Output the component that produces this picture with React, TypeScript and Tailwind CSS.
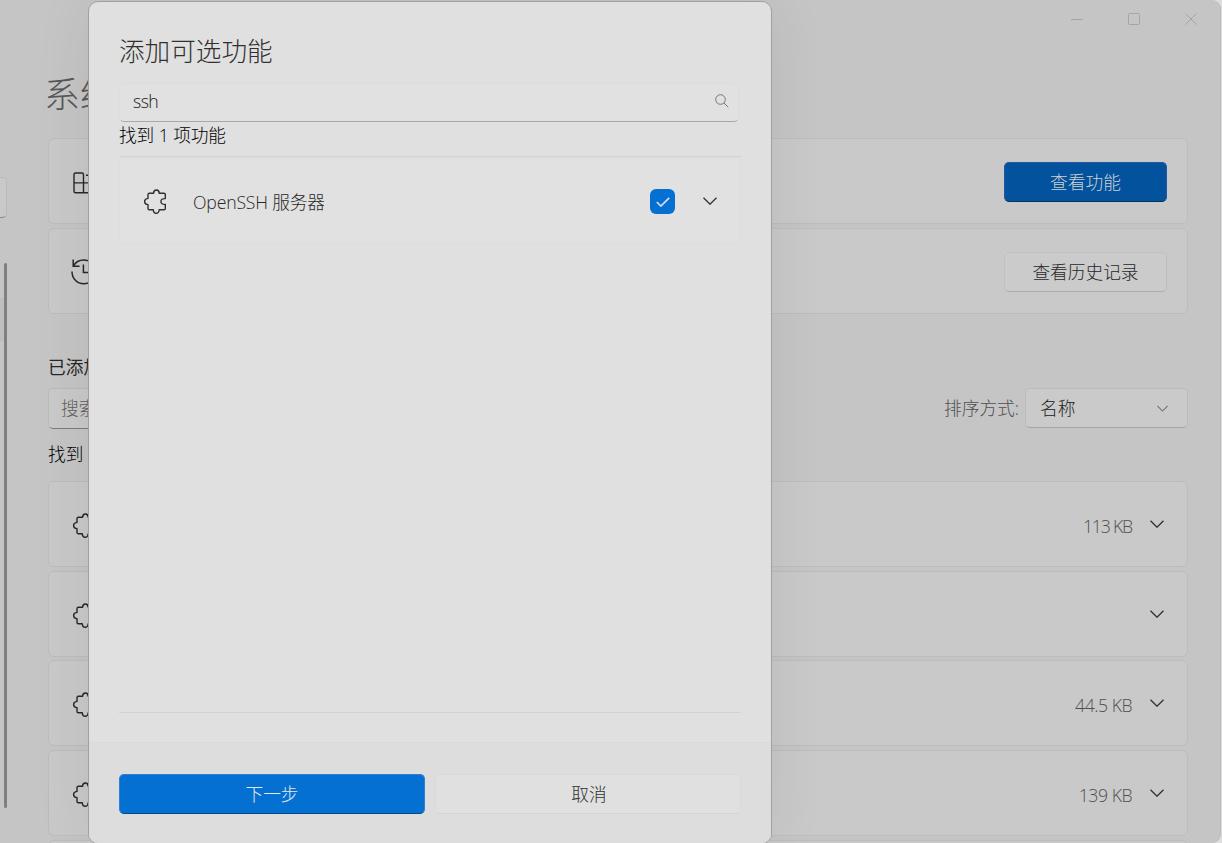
import { useState } from "react";
import type { ReactNode } from "react";
import clsx from "clsx";

const features = [
  { id: "a", size: "113 KB" },
  { id: "b", size: "" },
  { id: "c", size: "44.5 KB" },
  { id: "d", size: "139 KB" },
  { id: "e", size: "" },
];

const PuzzleIcon = ({ className }: { className?: string }) => (
  <svg
    viewBox="0 0 24 26"
    className={clsx("h-[26px] w-6 shrink-0", className)}
    fill="none"
    stroke="currentColor"
    strokeWidth="1.4"
    strokeLinejoin="round"
  >
    <path d="M6.3 4.3H10.6C10.6 2 11.7 1 13.4 1S16.2 2 16.2 4.3H21Q22.3 4.3 22.3 5.6V9.6C19.3 9.4 17.9 10.6 17.9 12.5S19.3 15.6 22.3 15.4V19.4Q22.3 20.7 21 20.7H16.2C16 23 15 24.2 13.2 24.2S10.4 23 10.3 20.7H6.3Q5 20.7 5 19.4V15.6C2.9 15.4 1.6 14.3 1.6 12.5S2.9 9.6 5 9.4V5.6Q5 4.3 6.3 4.3Z" />
  </svg>
);

const GridIcon = () => (
  <svg viewBox="0 0 24 24" className="mt-[3px] size-6" fill="none" stroke="currentColor" strokeWidth="1.4">
    <path d="M11.5 11.9V3.5Q11.5 2 10 2H3.5Q2 2 2 3.5V20.3Q2 21.8 3.5 21.8H20Q21.5 21.8 21.5 20.3V11.9H2M11.5 11.9V21.8M14 4.2H20" />
  </svg>
);

const HistoryIcon = () => (
  <svg viewBox="0 0 28 28" className="mt-0.5 size-7" fill="none" stroke="currentColor" strokeWidth="1.5">
    <path d="M3.2 1.5V8.2H9.5M3.5 8C5.5 4 9 2 13.8 2C20.5 2 25.5 7 25.5 13.8S20.5 25.7 13.8 25.7S2 20.5 2 13.4M13.4 6.5V14.5H19" />
  </svg>
);

const Chevron = ({ className }: { className?: string }) => (
  <svg
    viewBox="0 0 14 8"
    className={clsx("shrink-0", className ?? "h-2 w-3.5")}
    fill="none"
    stroke="currentColor"
    strokeWidth="1.3"
  >
    <path d="M0.5 0.8 7 7.2 13.5 0.8" />
  </svg>
);

const Card = ({ children }: { children?: ReactNode }) => (
  <div className="flex h-[86px] shrink-0 items-center rounded-md border border-[#bcbcbc] bg-[#c9c9c9] pr-5 pl-[23px]">
    {children}
  </div>
);

const TitleBar = () => (
  <div className="flex h-10 shrink-0 items-start justify-end gap-[45px] pt-[13px] pr-[23px] text-[#a5a5a5]">
    <svg viewBox="0 0 12 12" className="size-3" stroke="currentColor">
      <path d="M0 6.5H12" />
    </svg>
    <svg viewBox="0 0 12 12" className="size-3" fill="none" stroke="currentColor">
      <rect x="0.5" y="0.5" width="11" height="11" rx="1" />
    </svg>
    <svg viewBox="0 0 12 12" className="size-3" stroke="currentColor">
      <path d="M0.3 0.3 11.7 11.7M11.7 0.3 0.3 11.7" />
    </svg>
  </div>
);

// Right edge of the navigation pane: search box, selected item and scrollbar
const NavEdge = () => (
  <div className="flex w-12 shrink-0 flex-col">
    <div className="mt-[177px] h-[41px] w-[7px] rounded-r-[5px] border border-l-0 border-[#b9b9b9] border-b-[#858585] bg-[#c9c9c9]" />
    <div className="mt-[45px] flex h-[545px]">
      <div className="mt-[34px] h-11 w-1 bg-[#bfbfbf]" />
      <div className="w-[3px] rounded-full bg-[#808080]" />
    </div>
  </div>
);

const OptionalFeaturesPage = () => (
  <div className="flex h-[843px] w-[1221px] overflow-hidden rounded-tr-[9px] rounded-br-[9px] border-r border-[#bababa] bg-[#c5c5c5]">
    <NavEdge />
    <div className="flex min-w-0 flex-1 flex-col">
      <TitleBar />
      <div className="mr-[32px] flex min-h-0 flex-1 flex-col">
        <h1 className="mt-[29px] -ml-1 h-[69px] shrink-0 text-[36px] leading-[52px] font-light text-[#585858]">
          系统
        </h1>
        <div className="flex shrink-0 flex-col gap-1">
          <Card>
            <span className="text-[#282828]">
              <GridIcon />
            </span>
            <button className="mt-0.5 ml-auto h-10 w-[163px] rounded-[5px] border border-[#2358a0] border-b-[#0a2f61] bg-[#02529d] text-[#d0d0d0]">
              查看功能
            </button>
          </Card>
          <Card>
            <span className="-ml-[2px] text-[#282828]">
              <HistoryIcon />
            </span>
            <button className="mt-0.5 ml-auto h-10 w-[163px] rounded-[5px] border border-[#c0c0c0] border-b-[#adadad] bg-[#cbcbcb] text-[#282828]">
              查看历史记录
            </button>
          </Card>
        </div>

        <h2 className="mt-[39px] h-[35px] shrink-0 leading-7 font-normal text-[#282828]">
          已添加的功能
        </h2>
        <div className="flex h-10 shrink-0 items-center">
          <div className="flex h-[41px] w-[300px] items-center rounded-[5px] border border-[#bababa] border-b-[#7c7c7c] bg-[#c9c9c9] pl-3 text-[#606060]">
            搜索已添加的功能
          </div>
          <span className="mr-[6px] ml-auto text-[#505050]">排序方式:</span>
          <button className="flex h-10 w-[163px] items-center justify-between rounded-[5px] border border-[#bcbcbc] border-b-[#a5a5a5] bg-[#cacaca] pr-[19px] pl-[14px] text-[#202020]">
            名称
            <Chevron className="h-[7px] w-[11px] text-[#707070]" />
          </button>
        </div>
        <p className="mt-[12px] h-[41px] shrink-0 leading-7 text-black">找到 12 项功能</p>

        <div className="flex flex-col gap-[3.7px]">
          {features.map((f) => (
            <Card key={f.id}>
              <PuzzleIcon className="mt-1 text-[#282828]" />
              <span
                className={clsx(
                  "mr-[18px] ml-auto pt-1 text-[#505050]",
                  f.size.startsWith("11") ? "tracking-[-1.2px]" : "tracking-[-0.5px]",
                )}
              >
                {f.size}
              </span>
              <Chevron className="mr-[3px] h-2 w-3.5 text-[#303030]" />
            </Card>
          ))}
        </div>
      </div>
    </div>
  </div>
);

const AddFeatureDialog = () => {
  const [query, setQuery] = useState("ssh");
  const [checked, setChecked] = useState(true);

  return (
    <div className="absolute top-px left-[88px] flex h-[843px] w-[684px] flex-col overflow-hidden rounded-[10px] border border-[#a0a0a0] bg-[#e0e0e0] shadow-[0_0_60px_rgba(0,0,0,0.07)]">
      <div className="flex h-[740px] flex-col px-[30px]">
        <h2 className="mt-[31px] h-[50px] text-[25.6px] leading-[38px] font-light text-[#303030]">
          添加可选功能
        </h2>
        <div className="flex h-[39px] w-[620px] items-center rounded-[5px] border border-[#dddddd] border-b-[#a8a8a8] bg-[#e1e1e1] pr-[9px] pl-[13px]">
          <input
            value={query}
            onChange={(e) => setQuery(e.target.value)}
            className="min-w-0 flex-1 bg-transparent pb-[3px] tracking-[-0.6px] text-[#202020] outline-none"
          />
          <svg
            viewBox="0 0 14 14"
            className="mb-[3px] size-3.5 text-[#777]"
            fill="none"
            stroke="currentColor"
          >
            <circle cx="5.5" cy="5.5" r="4.8" />
            <path d="M9 9 13.3 13.3" />
          </svg>
        </div>
        <p className="h-[34px] leading-[26px] tracking-[-0.1px] text-black">找到 1 项功能</p>
        <div className="flex h-[557px] flex-col border-y border-[#d2d2d2]">
          <div className="flex h-[87px] items-center rounded-md border border-[#dddddd] bg-[#e1e1e1] pr-[23px] pl-[23px]">
            <PuzzleIcon className="mt-0.5 text-[#303030]" />
            <span className="ml-[26px] pt-1 tracking-[-0.2px] text-[#282828]">OpenSSH 服务器</span>
            <button
              onClick={() => setChecked(!checked)}
              className={clsx(
                "mt-0.5 ml-auto flex size-[25px] items-center justify-center rounded-md",
                checked ? "bg-[#0370d2]" : "border border-[#808080]",
              )}
              aria-label="OpenSSH 服务器"
            >
              <svg
                viewBox="0 0 14 10"
                className="h-[10px] w-3.5 text-[#dcdcee]"
                fill="none"
                stroke="currentColor"
                strokeWidth="1.7"
              >
                <path d="M0.8 5 4.9 9 13.2 0.9" />
              </svg>
            </button>
            <Chevron className="ml-[28px] h-2 w-3.5 text-[#303030]" />
          </div>
        </div>
      </div>
      <div className="flex flex-1 gap-[10px] border-t border-[#dadada] bg-[#dddddd] px-[30px] pt-[31px]">
        <button className="h-10 w-[306px] rounded-[5px] border border-[#2f7fd3] border-b-[#05468a] bg-[#0370d2] text-[#e8e8e8]">
          下一步
        </button>
        <button className="h-10 w-[306px] rounded-[5px] border border-[#dadada] border-b-[#d3d3d3] bg-[#e0e0e0] pl-0.5 text-[#303030]">
          取消
        </button>
      </div>
    </div>
  );
};

export default function App() {
  return (
    <div className="relative h-[843px] w-[1222px] overflow-hidden bg-[#dedede] font-['Open_Sans','Noto_Sans_CJK_SC',sans-serif] text-[17.7px] font-light">
      <OptionalFeaturesPage />
      <AddFeatureDialog />
    </div>
  );
}
